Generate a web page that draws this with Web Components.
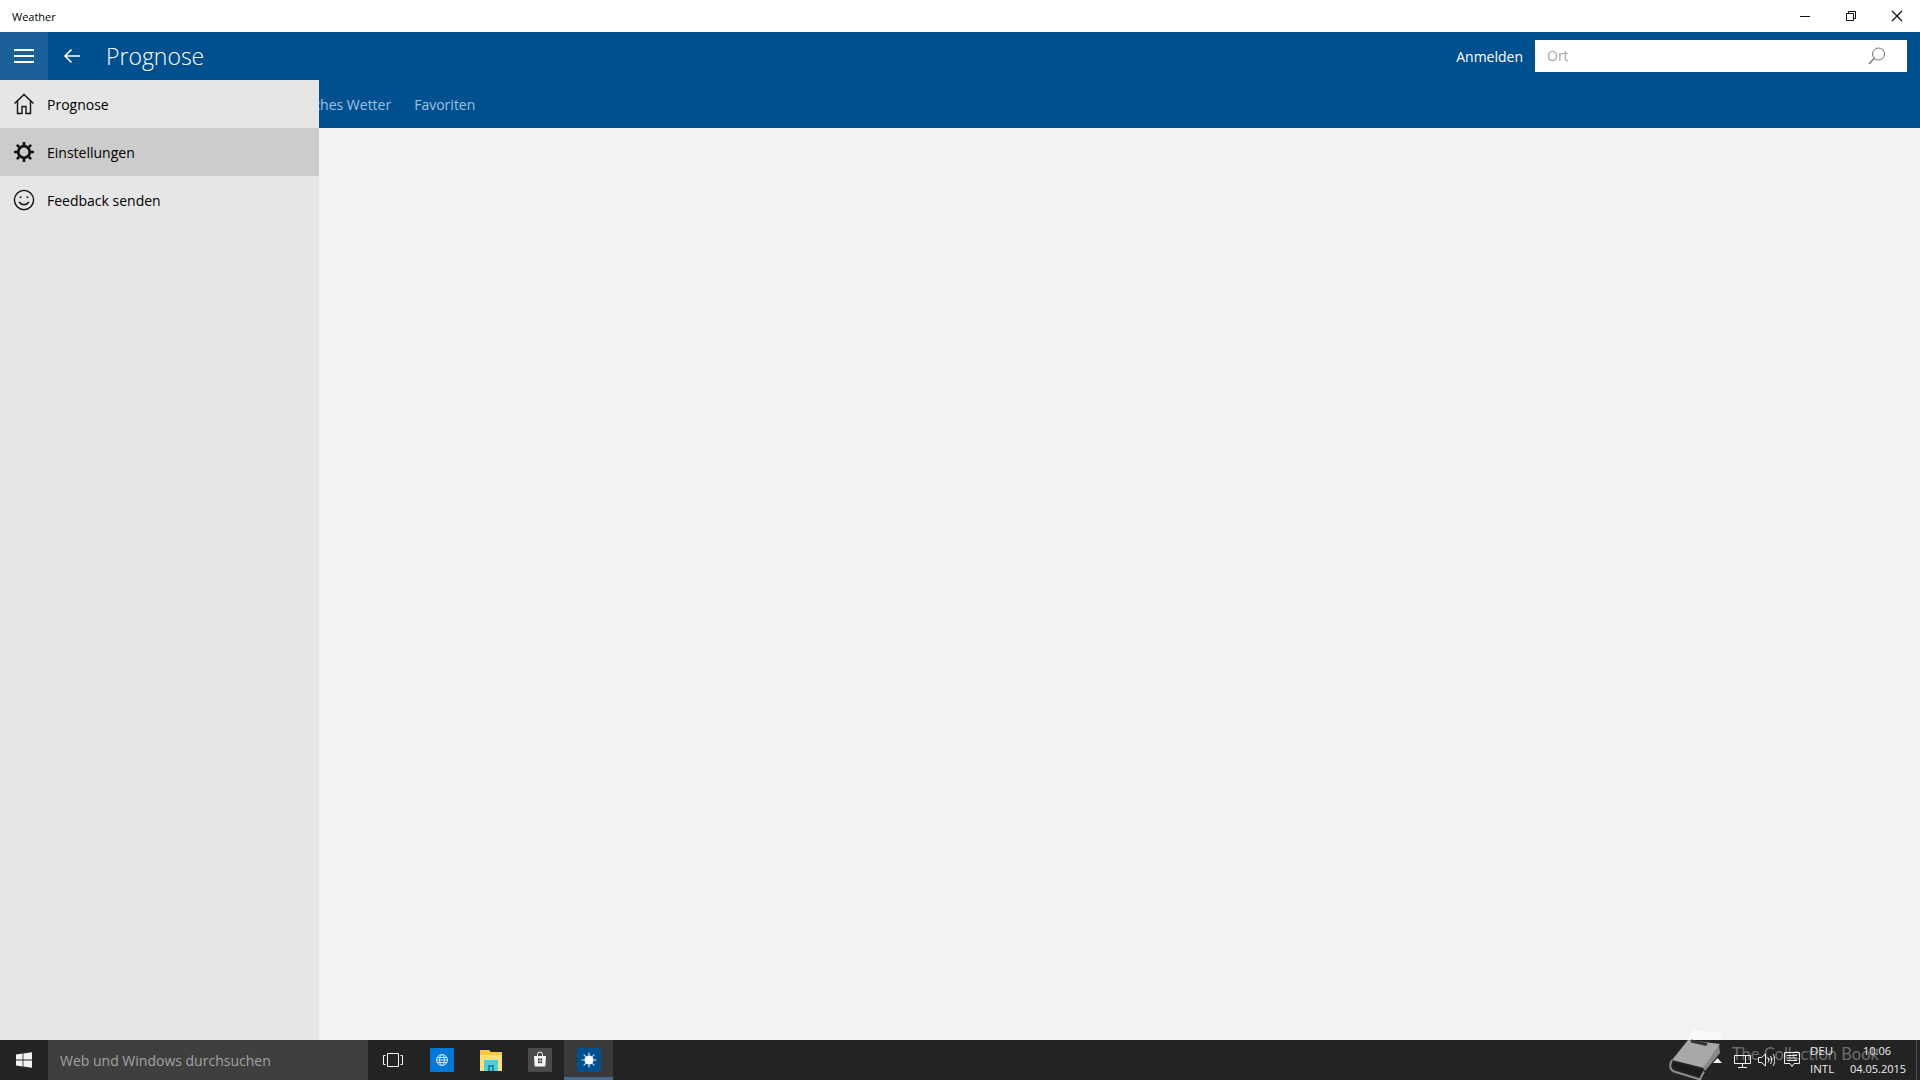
<!DOCTYPE html>
<html lang="de">
<head>
<meta charset="utf-8">
<title>Weather</title>
<style>
html, body {
	margin: 0;
	height: 100%;
	overflow: hidden;
}
body {
	font-family: "Open Sans", "Noto Sans", sans-serif;
}
weather-app {
	height: 100vh;
}
</style>
</head>
<body>
<weather-app>
	<title-bar slot="title" caption="Weather"></title-bar>
	<app-header slot="header" heading="Prognose">
		<tab-link>Karten</tab-link>
		<tab-link>Historisches Wetter</tab-link>
		<tab-link>Favoriten</tab-link>
	</app-header>
	<nav-pane slot="pane">
		<nav-item icon="home">Prognose</nav-item>
		<nav-item icon="gear" active>Einstellungen</nav-item>
		<nav-item icon="smile">Feedback senden</nav-item>
	</nav-pane>
	<task-bar slot="taskbar"></task-bar>
</weather-app>

<script>
const appTemplate = document.createElement("template");
appTemplate.innerHTML = `
<style>
:host {
	display: flex;
	flex-direction: column;
}
.body {
	flex: 1;
	position: relative;
	background: #f2f2f2;
}
.pane {
	position: absolute;
	left: 0;
	top: -48px;
	bottom: 0;
	width: 319px;
}
</style>
<slot name="title"></slot>
<slot name="header"></slot>
<div class="body"><div class="pane"><slot name="pane"></slot></div></div>
<slot name="taskbar"></slot>
`;

class WeatherApp extends HTMLElement {
	constructor() {
		super().attachShadow({ mode: "open" }).appendChild(appTemplate.content.cloneNode(true));
	}
}
customElements.define("weather-app", WeatherApp);

const titleTemplate = document.createElement("template");
titleTemplate.innerHTML = `
<style>
:host {
	display: flex;
	align-items: center;
	height: 32px;
	background: #fff;
	color: #000;
	font-size: 11px;
	padding-left: 12px;
}
span {
	flex: 1;
}
button {
	width: 46px;
	height: 32px;
	border: 0;
	padding: 0;
	background: none;
	display: flex;
	align-items: center;
	justify-content: center;
}
svg {
	width: 12px;
	height: 12px;
	fill: none;
	stroke: #111;
	stroke-width: 1;
}
</style>
<span></span>
<button aria-label="Minimieren"><svg viewBox="0 0 12 12"><path d="M1 6.5h10"/></svg></button>
<button aria-label="Wiederherstellen"><svg viewBox="0 0 12 12"><path d="M1.5 3.5h7v7h-7zM3.500 3.500v-2h7v7h-2"/></svg></button>
<button aria-label="Schliessen"><svg viewBox="0 0 12 12"><path d="M1 1l10 10M11 1L1 11" stroke-width="1.3"/></svg></button>
`;

class TitleBar extends HTMLElement {
	constructor() {
		super().attachShadow({ mode: "open" }).appendChild(titleTemplate.content.cloneNode(true));
	}

	connectedCallback() {
		this.shadowRoot.querySelector("span").textContent = this.getAttribute("caption");
	}
}
customElements.define("title-bar", TitleBar);

const headerTemplate = document.createElement("template");
headerTemplate.innerHTML = `
<style>
:host {
	display: block;
	height: 96px;
	background: #00508f;
	color: #fff;
}
.top {
	display: flex;
	align-items: center;
	height: 48px;
}
.toggle {
	width: 48px;
	height: 48px;
	background: #1b6099;
	display: flex;
	align-items: center;
	justify-content: center;
}
.back {
	width: 58px;
	display: flex;
	justify-content: center;
	padding-right: 10px;
	box-sizing: border-box;
}
h1 {
	flex: 1;
	margin: 0;
	font-size: 23px;
	font-weight: 300;
	line-height: 48px;
}
.login {
	font-size: 14px;
	margin-right: 12px;
}
.search {
	display: flex;
	align-items: center;
	justify-content: space-between;
	width: 372px;
	height: 32px;
	box-sizing: border-box;
	padding: 0 21px 0 12px;
	margin-right: 13px;
	background: #fff;
	color: #a6a6a6;
	font-size: 14px;
}
.search span {
	margin-bottom: 2px;
}
.tabs {
	display: flex;
	gap: 23px;
	height: 48px;
	align-items: center;
	padding-left: 197px;
}
svg {
	display: block;
	fill: none;
	stroke: currentColor;
}
</style>
<div class="top">
	<div class="toggle"><svg width="20" height="16" viewBox="0 0 20 16" stroke-width="2"><path d="M0 2h20M0 8h20M0 14h20"/></svg></div>
	<div class="back"><svg width="18" height="16" viewBox="0 0 18 16" stroke-width="1.6"><path d="M17 8H2M8.5 1.5L2 8l6.5 6.5"/></svg></div>
	<h1></h1>
	<span class="login">Anmelden</span>
	<div class="search">
		<span>Ort</span>
		<svg width="18" height="18" viewBox="0 0 18 18" style="color:#707070"><circle cx="10.5" cy="7" r="6"/><path d="M6.3 11.3L1 17" stroke-width="1.3"/></svg>
	</div>
</div>
<div class="tabs"><slot></slot></div>
`;

class AppHeader extends HTMLElement {
	constructor() {
		super().attachShadow({ mode: "open" }).appendChild(headerTemplate.content.cloneNode(true));
	}

	connectedCallback() {
		this.shadowRoot.querySelector("h1").textContent = this.getAttribute("heading");
	}
}
customElements.define("app-header", AppHeader);

const tabTemplate = document.createElement("template");
tabTemplate.innerHTML = `
<style>
:host {
	display: block;
	font-size: 14px;
	white-space: nowrap;
	color: #9dc3e4;
}
</style>
<slot></slot>
`;

class TabLink extends HTMLElement {
	constructor() {
		super().attachShadow({ mode: "open" }).appendChild(tabTemplate.content.cloneNode(true));
	}
}
customElements.define("tab-link", TabLink);

const paneTemplate = document.createElement("template");
paneTemplate.innerHTML = `
<style>
:host {
	display: block;
	height: 100%;
	background: #e6e6e6;
}
</style>
<slot></slot>
`;

class NavPane extends HTMLElement {
	constructor() {
		super().attachShadow({ mode: "open" }).appendChild(paneTemplate.content.cloneNode(true));
	}
}
customElements.define("nav-pane", NavPane);

const navIcons = {
	home: `<path d="M1.500 10.500L11 1.500l9.500 9M4.500 8v12.500h4.500v-7h4v7h4.500V8" stroke-width="1.4"/>`,
	gear: `<circle cx="11" cy="11" r="5.800" stroke-width="2.800"/><path d="M11 1v3.500M11 17.500V21M1 11h3.500M17.500 11H21M3.900 3.900l2.500 2.500M15.600 15.600l2.500 2.500M18.100 3.900l-2.500 2.500M6.400 15.600l-2.500 2.500" stroke-width="2.600"/>`,
	smile: `<circle cx="11" cy="11" r="9.600" stroke-width="1.4"/><path d="M6 13c2.500 3.600 7.500 3.600 10 0" stroke-width="1.4"/><path d="M7.500 7.500v1.600M14.500 7.500v1.600" stroke-width="1.8"/>`,
};

const navTemplate = document.createElement("template");
navTemplate.innerHTML = `
<style>
:host {
	display: flex;
	align-items: center;
	gap: 12px;
	height: 48px;
	padding-left: 13px;
	font-size: 14px;
	color: #000;
}
:host([active]) {
	background: #cccccc;
}
svg {
	width: 22px;
	height: 22px;
	fill: none;
	stroke: #111;
}
</style>
<svg viewBox="0 0 22 22"></svg>
<slot></slot>
`;

class NavItem extends HTMLElement {
	constructor() {
		super().attachShadow({ mode: "open" }).appendChild(navTemplate.content.cloneNode(true));
	}

	connectedCallback() {
		this.shadowRoot.querySelector("svg").innerHTML = navIcons[this.getAttribute("icon")];
	}
}
customElements.define("nav-item", NavItem);

const taskTemplate = document.createElement("template");
taskTemplate.innerHTML = `
<style>
:host {
	display: flex;
	position: relative;
	height: 40px;
	background: #232323;
	color: #f0f0f0;
	font-size: 12px;
}
.start {
	width: 48px;
	display: flex;
	align-items: center;
	justify-content: center;
}
.search {
	width: 320px;
	box-sizing: border-box;
	padding: 1px 0 0 12px;
	background: #3f3f3f;
	color: #a3a3a3;
	font-size: 14px;
	line-height: 40px;
}
.task {
	width: 49px;
	display: flex;
	align-items: center;
	justify-content: center;
	box-sizing: border-box;
}
.task.active {
	background: #3a3a3a;
	border-bottom: 3px solid #47698c;
	padding-top: 3px;
}
.tray {
	margin-left: auto;
	display: flex;
	align-items: center;
	height: 40px;
	position: relative;
}
.tray svg {
	fill: none;
	stroke: #f0f0f0;
}
.lang {
	margin-left: 10px;
	width: 40px;
	text-align: left;
	line-height: 18px;
	font-size: 11.500px;
}
.clock {
	width: 54px;
	text-align: center;
	line-height: 18px;
	margin-right: 12px;
	font-size: 11px;
}
.edge {
	width: 1px;
	height: 40px;
	background: #4a4a4a;
	margin-right: 3px;
}
.mark {
	position: absolute;
	left: 1660px;
	top: -10px;
	display: flex;
	align-items: flex-start;
	gap: 2px;
	color: #6e6e6e;
	font-family: Lato, "Open Sans", sans-serif;
	font-size: 16.500px;
	white-space: nowrap;
	pointer-events: none;
}
.mark span {
	margin-top: 14px;
}
</style>
<div class="start"><svg width="16" height="16" viewBox="0 0 16 16" fill="#f2f2f2"><path d="M0 2.400l6.600-.9v6.100H0zM7.400 1.400L16 .2v7.400H7.400zM0 8.400h6.600v6.100L0 13.600zM7.400 8.400H16v7.400l-8.600-1.200z"/></svg></div>
<div class="search">Web und Windows durchsuchen</div>
<div class="task"><svg width="20" height="16" viewBox="0 0 20 16" fill="none" stroke="#f4f4f4"><path d="M4.500 1.500h11v13h-11zM2.500 3.500H.5v9h2M17.500 3.500h2v9h-2"/></svg></div>
<div class="task"><svg width="24" height="24" viewBox="0 0 24 24"><rect width="24" height="24" fill="#0078d7"/><g fill="none" stroke="#cfe6fa"><circle cx="12" cy="12" r="5.500"/><ellipse cx="12" cy="12" rx="2.400" ry="5.500"/><path d="M6.500 12h11M7.200 9.500h9.600M7.200 14.500h9.600"/></g></svg></div>
<div class="task"><svg width="22" height="22" viewBox="0 0 22 22"><path d="M0 1h9l2 2h11v19H0z" fill="#f8c93e"/><path d="M0 6h22v16H0z" fill="#ffe07a"/><rect x="4" y="11" width="14" height="11" fill="#4dcdde"/><path d="M8 22v-6h6v6h-2v-4h-2v4z" fill="#1f8ea3"/></svg></div>
<div class="task"><svg width="24" height="24" viewBox="0 0 24 24"><rect width="24" height="24" fill="#4a4a4a"/><path d="M6 8h12l-.7 10.500H6.700z" fill="#f6f6f6"/><path d="M9.500 8V6.500a2.500 2.500 0 0 1 5 0V8" fill="none" stroke="#f6f6f6"/><path d="M10 10.500h1.800v2H10zM12.400 10.500h1.800v2h-1.800zM10 13.200h1.800v2H10zM12.400 13.200h1.800v2h-1.800z" fill="#3a3a3a"/></svg></div>
<div class="task active"><svg width="24" height="24" viewBox="0 0 24 24"><rect width="24" height="24" fill="#00508f"/><circle cx="12" cy="12" r="4.600" fill="#fff"/><path d="M12 4.500v3M12 16.500v3M4.500 12h3M16.500 12h3M6.700 6.700l2 2M15.300 15.300l2 2M17.300 6.700l-2 2M8.700 15.300l-2 2" stroke="#cfe2f3" stroke-width="1.2"/></svg></div>
<div class="mark">
	<svg width="70" height="50" viewBox="0 0 70 50" style="flex:none"><path d="M33 0L62 3l-2 7H28z" fill="#fafafa"/><path d="M28 10L60 14 44 38 12 30z" fill="#a8a8a8"/><path d="M31 11l16 3.500" stroke="#333" stroke-width="3" fill="none"/><path d="M59 15l1 8-15 18-2-3z" fill="#8a8a8a"/><path d="M15 32l27 8-3 6-22-7c-4-2-5-5-2-7z" fill="#1c1c1c"/><path d="M12 30c-3 5-2 10 2 11.500L40 49.500l4-8" fill="none" stroke="#8e8e8e" stroke-width="2"/></svg>
	<span>The Collection Book</span>
</div>
<div class="tray">
	<svg width="9" height="5" viewBox="0 0 9 5" style="stroke:none;fill:#f0f0f0;margin-right:12px"><path d="M4.500 0L9 5H0z"/></svg>
	<svg width="17" height="17" viewBox="0 0 17 17" style="margin-right:7px"><path d="M4.500 3.500H.5v8h16v-8h-5M.5 3.500h11v8M8.500 11.500v4M4 15.500h9"/></svg>
	<svg width="17" height="14" viewBox="0 0 17 14" style="margin-right:9px"><path d="M.5 4.500h3L7.500 1v12l-4-3.500h-3zM10 4.500c1 1.500 1 3.500 0 5M12.500 3c1.500 2.500 1.500 5.500 0 8M15 1c2.300 3.500 2.300 8.500 0 12"/></svg>
	<svg width="16" height="16" viewBox="0 0 16 16"><path d="M.5.5h15v11H10L8 14.500 6 11.500H.5zM3 3.500h10M3 6h10M3 8.500h10"/></svg>
	<div class="lang">DEU<br>INTL</div>
	<div class="clock">10:06<br>04.05.2015</div>
	<div class="edge"></div>
</div>
`;

class TaskBar extends HTMLElement {
	constructor() {
		super().attachShadow({ mode: "open" }).appendChild(taskTemplate.content.cloneNode(true));
	}
}
customElements.define("task-bar", TaskBar);
</script>
</body>
</html>
